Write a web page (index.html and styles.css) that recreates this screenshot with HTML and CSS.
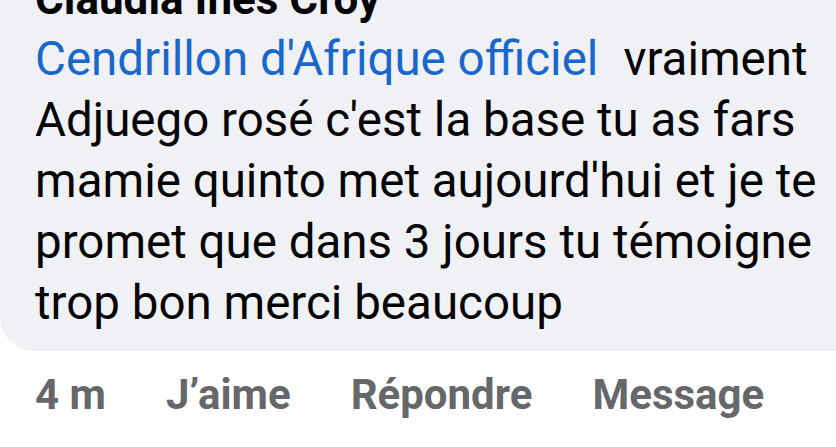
FILE: index.html
```html
<!DOCTYPE html>
<html lang="fr">
<head>
    <meta charset="UTF-8">
    <meta name="viewport" content="width=device-width, initial-scale=1.0">
    <title>Commentaire</title>
    <link rel="stylesheet" href="styles.css">
</head>
<body>
    <div class="comment">
        <div class="bubble">
            <div class="author">Claudia Ines Croy</div>
            <p class="text">
                <a class="mention" href="#">Cendrillon d'Afrique officiel</a>vraiment Adjuego rosé c'est la base tu as fars mamie quinto met aujourd'hui et je te promet que dans 3 jours tu témoigne trop bon merci beaucoup
            </p>
        </div>

        <div class="actions">
            <span class="time">4 m</span>
            <span class="action">J’aime</span>
            <span class="action">Répondre</span>
            <span class="action">Message</span>
        </div>
    </div>
</body>
</html>
```

FILE: styles.css
```css
* {
    margin: 0;
    padding: 0;
    box-sizing: border-box;
}

body {
    font-family: Roboto, "Noto Sans", sans-serif;
    background: #fff;
    color: #050505;
    overflow: hidden;
}

.comment {
    width: 836px;
}

.bubble {
    margin-top: -32px;
    margin-right: -30px;
    background: #f0f1f5;
    border-radius: 0 0 34px 34px;
    padding: 0 40px 17px 35px;
    font-size: 47.5px;
    line-height: 61px;
}

.author {
    font-size: 44px;
    font-weight: 700;
    color: #050505;
    padding-top: 2px;
    line-height: 59px;
}

.text {
    color: #050505;
}

.mention {
    color: #1a67cc;
    text-decoration: none;
    margin-right: 25px;
}

.actions {
    display: flex;
    gap: 60px;
    margin-top: 20px;
    padding-left: 35px;
    font-size: 42px;
    line-height: 48px;
    font-weight: 700;
    color: #65676b;
}
```
